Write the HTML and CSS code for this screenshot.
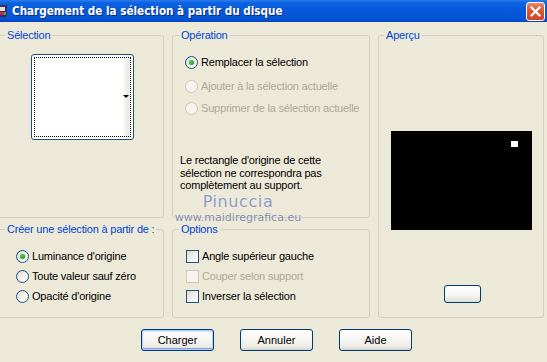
FILE: index.html
```html
<!DOCTYPE html>
<html lang="fr">

<head>
    <meta charset="UTF-8">
    <title>Chargement de la sélection à partir du disque</title>
    <link rel="stylesheet" href="styles.css">
</head>

<body>
    <div class="window">
        <div class="titlebar">
            <svg class="app-icon" width="10" height="14" viewBox="0 0 10 14">
                <rect x="0" y="1" width="9" height="12" fill="#3a2a6a"/>
                <rect x="1" y="3" width="6" height="4" fill="#e8e0c8"/>
                <rect x="2" y="8" width="4" height="3" fill="#c03050"/>
                <rect x="6" y="8" width="2" height="3" fill="#40a060"/>
            </svg>
            <span class="title">Chargement de la sélection à partir du disque</span>
            <span class="close-btn">
                <svg width="11" height="11" viewBox="0 0 11 11">
                    <path d="M1.5 1.5 L9.5 9.5 M9.5 1.5 L1.5 9.5" stroke="#fff" stroke-width="2.2" stroke-linecap="square"/>
                </svg>
            </span>
        </div>

        <div class="panels">
            <section class="group g-selection">
                <span class="legend">Sélection</span>
                <div class="swatch">
                    <div class="swatch-focus"></div>
                    <span class="swatch-arrow"></span>
                </div>
            </section>

            <section class="group g-operation">
                <span class="legend">Opération</span>
                <div class="choices op-choices">
                    <label class="choice"><span class="radio checked"></span>Remplacer la sélection</label>
                    <label class="choice disabled"><span class="radio"></span>Ajouter à la sélection actuelle</label>
                    <label class="choice disabled"><span class="radio"></span>Supprimer de la sélection actuelle</label>
                </div>
                <p class="note">Le rectangle d'origine de cette<br>sélection ne correspondra pas<br>complètement au support.</p>
            </section>

            <section class="group g-preview">
                <span class="legend">Aperçu</span>
                <div class="preview">
                    <span class="preview-dot"></span>
                </div>
                <button class="small-btn" type="button"></button>
            </section>

            <section class="group g-source">
                <span class="legend">Créer une sélection à partir de :</span>
                <div class="choices low-choices">
                    <label class="choice"><span class="radio checked"></span>Luminance d'origine</label>
                    <label class="choice"><span class="radio"></span>Toute valeur sauf zéro</label>
                    <label class="choice"><span class="radio"></span>Opacité d'origine</label>
                </div>
            </section>

            <section class="group g-options">
                <span class="legend">Options</span>
                <div class="choices low-choices">
                    <label class="choice"><span class="check"></span>Angle supérieur gauche</label>
                    <label class="choice disabled"><span class="check"></span>Couper selon support</label>
                    <label class="choice"><span class="check"></span>Inverser la sélection</label>
                </div>
            </section>
        </div>

        <div class="actions">
            <button class="btn default" type="button">Charger</button>
            <button class="btn" type="button">Annuler</button>
            <button class="btn" type="button">Aide</button>
        </div>

        <div class="watermark">
            <span class="wm-name">Pinuccia</span>
            <span class="wm-site">www.maidiregrafica.eu</span>
        </div>
    </div>
</body>

</html>
```

FILE: styles.css
```css
body {
    margin: 0;
    padding: 0;
    background-color: #ece9d8;
    font-family: 'Liberation Sans', Arial, sans-serif;
    font-size: 11px;
    letter-spacing: -0.2px;
    color: #000;
}

.window {
    position: relative;
    width: 547px;
    height: 362px;
    overflow: hidden;
    background-color: #ece9d8;
}

/* title bar */
.titlebar {
    display: flex;
    align-items: center;
    height: 22px;
    background: linear-gradient(to bottom, #2b7cf0 0, #0a62e0 3px, #0658d8 12px, #0556d6 18px, #0446c0 22px);
}

.app-icon {
    margin-left: -2px;
    flex: none;
}

.title {
    margin-left: 4px;
    color: #fff;
    font-family: 'DejaVu Sans Condensed', 'DejaVu Sans', sans-serif;
    font-weight: bold;
    font-size: 11.6px;
    letter-spacing: 0;
    text-shadow: 1px 1px 0 #0a2a80;
    flex: 1;
}

.close-btn {
    display: flex;
    align-items: center;
    justify-content: center;
    width: 19px;
    height: 19px;
    margin-right: 2px;
    border: 1px solid #fff;
    border-radius: 3px;
    background: linear-gradient(to bottom, #e8876c 0, #e05a38 40%, #d34322 100%);
    box-sizing: border-box;
}

/* group boxes */
.panels {
    display: grid;
    grid-template-columns: 167px 198px 166px;
    grid-template-rows: 183px 89px;
    column-gap: 8px;
    row-gap: 11px;
    margin-top: 13px;
    margin-left: -3px;
}

.group {
    border: 1px solid #d0d0bf;
    border-radius: 3px;
    box-sizing: border-box;
}

.legend {
    display: block;
    width: fit-content;
    height: 13px;
    line-height: 13px;
    margin-top: -7px;
    margin-left: 7px;
    padding: 0 2px;
    white-space: nowrap;
    background-color: #ece9d8;
    color: #0046d5;
}

.g-operation .legend,
.g-options .legend {
    margin-left: 6px;
}

.g-preview {
    grid-row: 1 / 3;
    grid-column: 3;
}

.g-preview .legend {
    margin-left: 5px;
}

/* selection swatch */
.swatch {
    position: relative;
    width: 103px;
    height: 86px;
    margin: 12px 0 0 33px;
    border: 1px solid #1c5180;
    border-radius: 3px;
    box-sizing: border-box;
    background: linear-gradient(to right, #fff 0, #fff 90px, #ebeae4 96px, #fff 101px);
}

.swatch-focus {
    position: absolute;
    inset: 2px;
    border: 1px dotted #000;
}

.swatch-arrow {
    position: absolute;
    right: 4px;
    top: 40px;
    width: 0;
    height: 0;
    border-left: 3px solid transparent;
    border-right: 3px solid transparent;
    border-top: 3px solid #000;
}

/* radios and checkboxes */
.choices {
    display: flex;
    flex-direction: column;
}

.choice {
    display: flex;
    align-items: center;
    gap: 3px;
    height: 13px;
    line-height: 13px;
}

.choice.disabled {
    color: #aca899;
}

.op-choices {
    margin: 14px 0 0 12px;
}

.op-choices .choice + .choice {
    margin-top: 11px;
}

.op-choices .choice:last-child {
    margin-top: 9px;
}

.low-choices {
    margin: 14px 0 0 18px;
    gap: 7px;
}

.g-options .low-choices {
    margin-left: 13px;
}

.radio {
    width: 13px;
    height: 13px;
    border: 1px solid #1c5180;
    border-radius: 50%;
    box-sizing: border-box;
    background: linear-gradient(135deg, #dcd9cb 0, #f4f3ee 55%, #fff 100%);
    position: relative;
    flex: none;
}

.radio.checked::after {
    content: "";
    position: absolute;
    left: 3px;
    top: 3px;
    width: 5px;
    height: 5px;
    border-radius: 50%;
    background: radial-gradient(circle at 40% 40%, #55d855 0, #21a121 60%, #1a8a1a 100%);
}

.disabled .radio,
.disabled .check {
    border-color: #cac8bb;
    background: #f5f4ee;
}

.check {
    width: 13px;
    height: 13px;
    border: 1px solid #1c5180;
    box-sizing: border-box;
    background: linear-gradient(135deg, #dcd9cb 0, #f4f3ee 60%, #fff 100%);
    flex: none;
}

.note {
    margin: 39px 0 0 7px;
    line-height: 12.6px;
}

/* preview */
.preview {
    position: relative;
    width: 141px;
    height: 99px;
    margin: 89px 0 0 12px;
    background-color: #000;
}

.preview-dot {
    position: absolute;
    left: 120px;
    top: 10px;
    width: 7px;
    height: 6px;
    background-color: #fff;
}

.small-btn {
    display: block;
    width: 37px;
    height: 18px;
    margin: 55px 0 0 65px;
    padding: 0;
    border: 1px solid #003c74;
    border-radius: 3px;
    background: linear-gradient(to bottom, #fff 0, #f4f4f0 60%, #e0ded4 100%);
}

/* bottom buttons */
.actions {
    display: flex;
    gap: 26px;
    margin-top: 11px;
    padding-left: 141px;
}

.btn {
    width: 73px;
    height: 22px;
    padding: 0;
    border: 1px solid #003c74;
    border-radius: 3px;
    background: linear-gradient(to bottom, #fff 0, #f6f5f1 50%, #ecebe5 85%, #d6d0c5 100%);
    font-family: 'Liberation Sans', Arial, sans-serif;
    font-size: 11px;
    color: #000;
}

.btn.default {
    box-shadow: inset 0 0 0 1px #b8d0f8, inset 0 -2px 0 0 #7f9de8, inset 0 2px 0 0 #cee7ff;
}

/* watermark over the dialog */
.watermark {
    position: absolute;
    left: 176px;
    top: 191px;
    display: flex;
    flex-direction: column;
    align-items: center;
    width: 124px;
    pointer-events: none;
}

.wm-name {
    font-family: 'DejaVu Sans', sans-serif;
    font-size: 16px;
    letter-spacing: 0.6px;
    line-height: 21px;
    color: #8f98bf;
    text-shadow: 0 0 1px #fff;
}

.wm-site {
    font-family: 'DejaVu Sans', sans-serif;
    font-size: 11px;
    letter-spacing: 0;
    line-height: 12px;
    color: #8089a6;
    text-shadow: 0 0 1px #fff;
}
```
